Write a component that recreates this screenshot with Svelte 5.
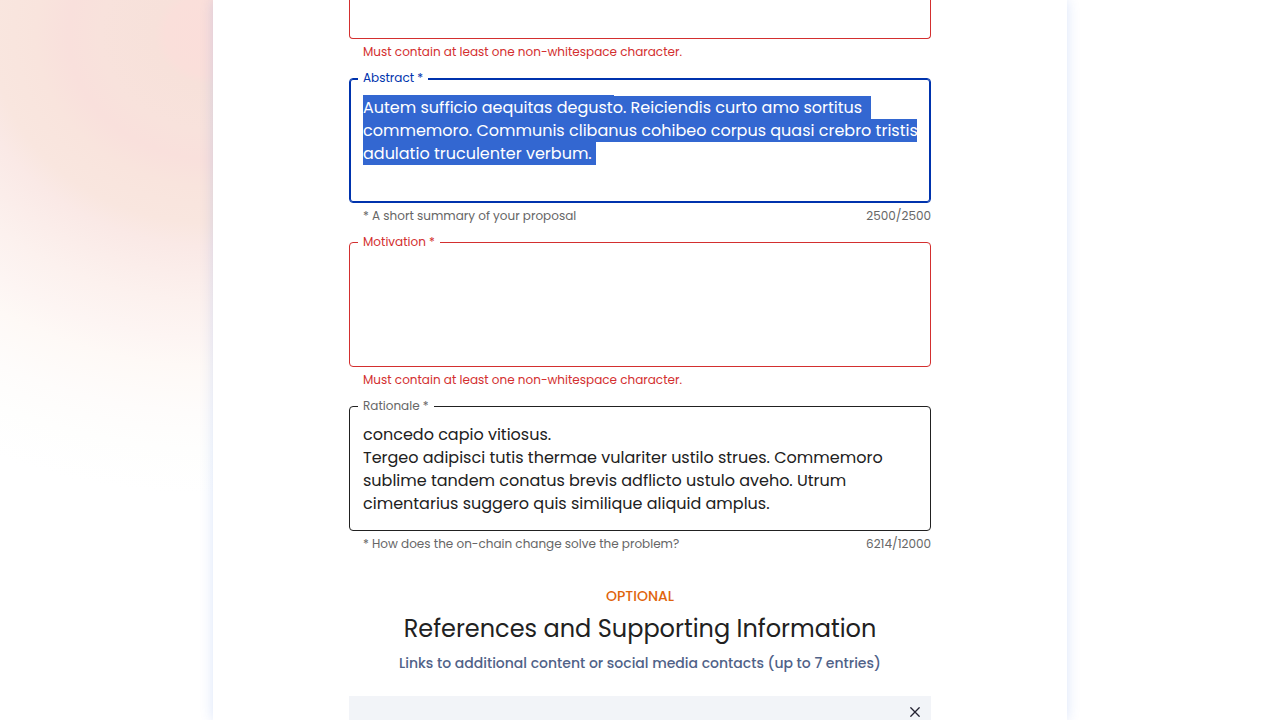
<script>
  import { onMount } from 'svelte';

  const fields = [
    {
      id: 'abstract',
      label: 'Abstract',
      state: 'active',
      hint: '* A short summary of your proposal',
      count: '2500/2500',
      value:
        'Vulgaris tepesco cado crur ton\n' +
        'Autem sufficio aequitas degusto. Reiciendis curto amo sortitus \n' +
        'commemoro. Communis clibanus cohibeo corpus quasi crebro tristis \n' +
        'adulatio truculenter verbum.\n',
    },
    {
      id: 'motivation',
      label: 'Motivation',
      state: 'error',
      hint: 'Must contain at least one non-whitespace character.',
      count: '',
      value: '',
    },
    {
      id: 'rationale',
      label: 'Rationale',
      state: 'normal',
      hint: '* How does the on-chain change solve the problem?',
      count: '6214/12000',
      value:
        'concedo capio vitiosus.\n' +
        'Tergeo adipisci tutis thermae vulariter ustilo strues. Commemoro\n' +
        'sublime tandem conatus brevis adflicto ustulo aveho. Utrum\n' +
        'cimentarius suggero quis similique aliquid amplus.',
    },
  ];

  onMount(() => {
    const abstract = document.getElementById('abstract');
    abstract.focus({ preventScroll: true });
    abstract.select();
    abstract.scrollTop = 22;
    abstract.scrollLeft = 0;
  });
</script>

<div class="page">
  <main class="card">
    <form class="form">
      <div class="field error partial">
        <div class="box">
          <textarea aria-label="Title" rows="1"></textarea>
        </div>
        <p class="helper"><span>Must contain at least one non-whitespace character.</span></p>
      </div>

      {#each fields as field (field.id)}
        <div class="field {field.state}">
          <div class="box">
            <label for={field.id}>{field.label} *</label>
            <textarea id={field.id} rows="4" spellcheck="false" value={field.value}></textarea>
          </div>
          <p class="helper">
            <span>{field.hint}</span>
            {#if field.count}<span>{field.count}</span>{/if}
          </p>
        </div>
      {/each}

      <section class="references">
        <p class="optional">OPTIONAL</p>
        <h2>References and Supporting Information</h2>
        <p class="subtitle">Links to additional content or social media contacts (up to 7 entries)</p>
        <div class="entry">
          <button type="button" aria-label="Remove entry">
            <svg viewBox="0 0 12 12" width="12" height="12" fill="none" stroke="#242232" stroke-width="1.3" stroke-linecap="round">
              <path d="M1.8 1.8L10.2 10.2M10.2 1.8L1.8 10.2" />
            </svg>
          </button>
        </div>
      </section>
    </form>
  </main>
</div>

<style>
  :global(body) {
    margin: 0;
    overflow: hidden;
  }

  .page {
    height: 100vh;
    overflow: hidden;
    display: flex;
    justify-content: center;
    font-family: Poppins, Inter, sans-serif;
    color: #212121;
    background: radial-gradient(
      ellipse 540px 460px at 214px 35px,
      #fbdeda 0%,
      #fadfda 9%,
      #f7e1da 11%,
      #f8e2dc 21%,
      #f9e0dc 27%,
      #f9e4dd 33%,
      #f9e6df 41%,
      #fae9e6 46%,
      #fcf1ee 58%,
      #fdf5f3 66%,
      #fef9f6 72%,
      #fefcfb 82%,
      #fefefd 90%,
      #ffffff 100%
    ), #fff;
  }

  .card {
    box-sizing: border-box;
    width: 66.7%;
    background: #fff;
    box-shadow: 0 0 12px #2f62dc2e;
  }

  .form {
    max-width: 582px;
    height: 100%;
    margin: 0 auto;
    display: flex;
    flex-direction: column;
  }

  .field {
    flex: none;
  }

  .box {
    position: relative;
    box-sizing: border-box;
    padding: 16px 13px 15px;
    border: 1px solid #212121;
    border-radius: 4px;
  }

  .active .box {
    border-color: #0033ad;
    box-shadow: inset 0 0 0 1px #0033ad;
  }

  .error .box {
    border-color: #d32f2f;
  }

  .partial .box {
    border-top: 0;
    border-radius: 0 0 4px 4px;
    padding-top: 0;
  }

  label {
    position: absolute;
    top: -10px;
    left: 8px;
    padding: 0 5px;
    font-size: 12px;
    line-height: 18px;
    color: #666;
    background: #fff;
  }

  .active label {
    color: #0033ad;
  }

  .error label,
  .error .helper {
    color: #d32f2f;
  }

  textarea {
    display: block;
    box-sizing: border-box;
    width: 100%;
    margin: 0;
    padding: 0;
    border: 0;
    outline: 0;
    resize: none;
    overflow: auto;
    scrollbar-width: none;
    white-space: pre;
    background: transparent;
    color: inherit;
    caret-color: transparent;
    font-family: inherit;
    font-size: 16px;
    line-height: 23px;
  }

  textarea::selection {
    color: #fff;
    background: #3367d1;
  }

  .helper {
    display: flex;
    justify-content: space-between;
    margin: 3px 0 16px 14px;
    font-size: 12px;
    line-height: 20px;
    color: #666;
  }

  .references {
    flex: 1;
    display: flex;
    flex-direction: column;
    padding-top: 14px;
    text-align: center;
  }

  .references p,
  h2 {
    margin: 0;
  }

  .references .optional {
    font-size: 14px;
    line-height: 24px;
    font-weight: 500;
    color: #e0640c;
  }

  h2 {
    font-size: 24px;
    line-height: 42px;
    font-weight: 400;
  }

  .references .subtitle {
    font-size: 14px;
    line-height: 26px;
    font-weight: 500;
    color: #506288;
  }

  .entry {
    flex: 1;
    display: flex;
    justify-content: flex-end;
    align-items: flex-start;
    margin-top: 20px;
    padding: 10px 10px 0;
    background: #f2f4f8;
  }

  button {
    display: flex;
    padding: 0;
    border: 0;
    background: none;
  }
</style>
